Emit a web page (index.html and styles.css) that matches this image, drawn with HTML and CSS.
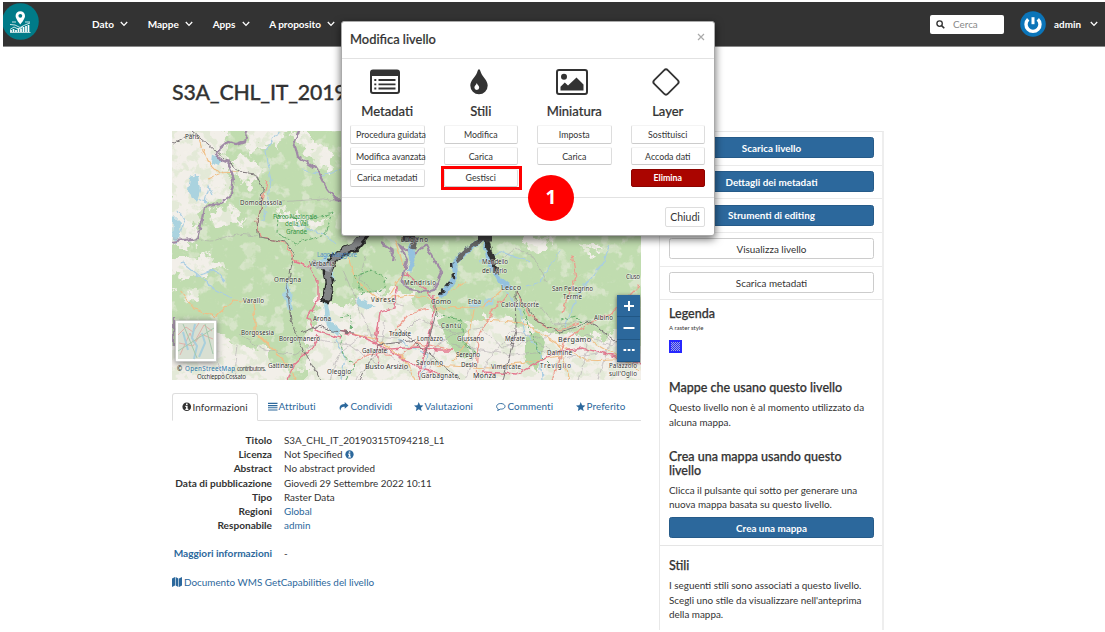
FILE: index.html
```html
<!DOCTYPE html>
<html lang="it">
<head>
<meta charset="utf-8">
<title>Modifica livello</title>
<link rel="stylesheet" href="styles.css">
</head>
<body>
<svg class="defs" width="0" height="0">
  <symbol id="chev" viewBox="0 0 8 6"><path d="M.8 1 4 4.4 7.200 1" fill="none" stroke="currentColor" stroke-width="1.3"/></symbol>
  <symbol id="star" viewBox="0 0 10 10"><path d="M5 0 6.400 3.300 10 3.600 7.300 6 8.100 9.600 5 7.700 1.900 9.600 2.700 6 0 3.600 3.600 3.300Z" fill="currentColor"/></symbol>
  <symbol id="info" viewBox="0 0 10 10"><circle cx="5" cy="5" r="4.600" fill="currentColor"/><path d="M4.200 1.600h1.700v1.500H4.200zM3.500 4h2.400v3.100h.8v1.200H3.500V7.100h.8V5.200h-.8z" fill="#fff"/></symbol>
</svg>

<header class="topbar">
  <svg class="logo" viewBox="3 2 36 40">
    <circle cx="20.500" cy="21.500" r="18.300" fill="#007b88"/>
    <path d="M20.300 11.200a4.700 4.700 0 0 0-4.700 4.700c0 3 4.700 8.500 4.700 8.500s4.700-5.500 4.700-8.500a4.700 4.700 0 0 0-4.700-4.700Z" fill="#fff"/>
    <circle cx="20.300" cy="15.800" r="1.900" fill="#007b88"/>
    <path d="M12 22h4M25 22h5M10 24.500l5 .5 5 2.500 5-2.500 5-2" stroke="#fff" stroke-width=".8" fill="none"/>
    <path d="M10 29.500l4-2.500 3 1.500 3 0 3-2" stroke="#fff" stroke-width=".8" fill="none"/>
    <path d="M11 32v-2M13.500 32v-3M16 32v-2M18.500 32v-3M21 32v-3.500M23.500 32v-5M26 32v-6M28.500 32v-7" stroke="#fff" stroke-width="1.700"/>
    <path d="M10 32.500h20.500" stroke="#fff" stroke-width=".7"/>
  </svg>
  <nav class="menu">
    <a>Dato<svg class="chev"><use href="#chev"/></svg></a>
    <a>Mappe<svg class="chev"><use href="#chev"/></svg></a>
    <a>Apps<svg class="chev"><use href="#chev"/></svg></a>
    <a>A proposito<svg class="chev"><use href="#chev"/></svg></a>
  </nav>
  <div class="search">
    <svg viewBox="0 0 10 10"><circle cx="4" cy="4" r="3" fill="none" stroke="#333" stroke-width="1.500"/><path d="M6.200 6.200 9.200 9.200" stroke="#333" stroke-width="1.800"/></svg>
    <span>Cerca</span>
  </div>
  <svg class="avatar" viewBox="0 0 26 26"><circle cx="13" cy="13" r="12.800" fill="#0b74b8"/><path d="M8.200 8.300a7 7 0 1 0 9.600 0" fill="none" stroke="#fff" stroke-width="3.400"/><path d="M13 6.200v7" stroke="#fff" stroke-width="3"/></svg>
  <a class="user">admin<svg class="chev"><use href="#chev"/></svg></a>
</header>

<main class="page">
  <h1>S3A_CHL_IT_20190315T094218_L1</h1>
  <div class="columns">
    <section class="content">
      <div class="map">
        <svg class="terrain" viewBox="172 131 469 249">
          <defs>
            <filter id="rough" x="-5%" y="-5%" width="110%" height="110%"><feTurbulence type="fractalNoise" baseFrequency=".09" numOctaves="4" seed="4"/><feDisplacementMap in="SourceGraphic" scale="24" xChannelSelector="R" yChannelSelector="G"/></filter>
            <filter id="wiggle" x="-5%" y="-5%" width="110%" height="110%" color-interpolation-filters="sRGB"><feTurbulence type="fractalNoise" baseFrequency=".14" numOctaves="2" seed="9"/><feDisplacementMap in="SourceGraphic" scale="6" xChannelSelector="R" yChannelSelector="G"/></filter>
            <filter id="fields" x="0" y="0" width="100%" height="100%"><feTurbulence type="fractalNoise" baseFrequency=".07" numOctaves="4" seed="12"/><feColorMatrix values="0 0 0 0 .9  0 0 0 0 .88  0 0 0 0 .82  9 0 0 0 -5"/></filter>
            <filter id="woods" x="0" y="0" width="100%" height="100%"><feTurbulence type="fractalNoise" baseFrequency=".09" numOctaves="4" seed="31"/><feColorMatrix values="0 0 0 0 .54  0 0 0 0 .73  0 0 0 0 .43  0 10 0 0 -5"/></filter>
          </defs>
          <rect x="172" y="131" width="469" height="249" fill="#c0dcaf"/>
          <g fill="#f2efe9" filter="url(#rough)">
            <path d="M165 120h55l10 15-8 20 10 25-12 22-18 5-6 35-30 10z"/>
            <path d="M225 160l25-5 15 18-15 15-12-12zM245 120l40 5-8 25-12-5-15 8zM292 132l12 2 30 20-4 20-20-15zM210 212l20-5 15 14-30 10zM275 210l30 4 25 8-15 6-30-4zM170 262l40-8 18 10-25 10-22 8zM176 290l28 5-18 12z"/>
            <path d="M165 350l45-22 25 18 30 2 20 22 15 25H165zM305 345l15-50 25 15 25-25 35 8 30 20 20 10 50-8 55 20 60-2 40 22 25-8v50H305zM530 235l25 5-10 10-22-3zM580 245l30 3-20 8z"/>
          </g>
          <rect x="172" y="131" width="469" height="249" filter="url(#fields)" opacity=".45"/>
          <rect x="172" y="131" width="469" height="249" filter="url(#woods)" opacity=".3"/>
          <g fill="#b5d8a5" filter="url(#wiggle)"><path d="M353 276l15-7 15 5 4 12-18 8-16-5zM438 320l14-4 15 8-4 17 10 14-12 4-14-17zM525 338l12-8 8 12-7 30-13-10z"/></g>
          <g fill="none" stroke="#a9cde2" stroke-width="1.200" filter="url(#wiggle)">
            <path d="M194 175l5 12-6 10 12 5 4-15 4 8M182 262l20 16 10 10 20 10M200 274l14-4 12 12M280 131l-14 20 5 30-8 40M302 170l20 5 20-6M297 225l25 8 15 12M505 290l15 20 5 22 15 20 2 28M560 250l-20 32-14 4M480 262l20-10 30 10M610 245l-8 20-25 30-12 32M335 340l10 18-4 22M178 210l7 12-10 22M398 340l30 15-8 25"/>
          </g>
          <g fill="#aad3df" filter="url(#wiggle)">
            <path d="M190 178l8-3 2 16-4 10-8-10zM173 215l8 8-2 18-7-2zM212 154l9 5-2 7-8-3zM285 287l3-6 3 10 2 21-5-2-4-13zM357 296l7 4 12 6-8 4-10-4zM470 302l12-2-2 8-10 1zM484 300l10-3-1 8-8 2z"/>
            <path d="M318 260l9-5 8 20-4 15-4 8 4 25 10 7-3 6-12-10-3-22 6-25z"/>
          </g>
          <g fill="none" stroke="#aaa3aa" stroke-width=".7" filter="url(#wiggle)" opacity=".75">
            <path d="M172 238l40 3 25-7 20 2M263 203l60-4 20 3M240 335l25 15 30 5 25-15 30 5 28 20M330 380l8-25 25-20 35 3 20-20 35 15 28-5 22 20 30-8 30 18 35-5 38 8M355 380l25-30 5-30M425 380l12-35 20-12 18 20-10 27M480 380l8-20 25-30 30 10 20-15 25 20-10 35M535 300l20 25 35-5 20 20-12 40M195 345l18 10 12 25M238 345l-4 35M343 270l30 70 40 35"/>
            <path d="M365 255l-5 25 25 20 20 5M500 260l15-12 20 10 12 25M585 335l25 10 30-8M452 345l60 10 70-6"/>
          </g>
          <g fill="none" stroke="#f0bf87" stroke-width="1.200" filter="url(#wiggle)">
            <path d="M198 136l9 25 12 12 20-1M208 178l16-6M180 290l15 20 20 6 18-16 20 2 3 30 15 15 18 20 10 17M254 302v30l30 28M345 250l12 32 22 18 30-5 28 4 30-18M433 308l50-1 20-18M345 332l30 7 30 20 10 21M473 310l-5 30-15 22M484 320l40 3 35 22 10 35M560 345l25 15 55-2M395 240l10 30-15 25M430 365l60 3 70-12M590 340l50 30"/>
          </g>
          <g fill="none" stroke="#65ad6d" stroke-width="1" stroke-dasharray="4 1.500" filter="url(#wiggle)">
            <path d="M278 215l25 6 30-8-8 22-30 8-18-10zM340 335l3 20 12 10-8 15M436 315l25 5 3 25 14 8M354 276l18-6 15 8-4 12-20 3zM520 300l8 25 12 30 10 10M340 317l12-2-2 15M560 320l15-4 10 10"/>
          </g>
          <g fill="none" stroke="#ee9a8c" stroke-width="1.200" filter="url(#wiggle)">
            <path d="M267 181l-3 14-7 27 3 15 26 6 8 18 11 4M390 335l18-20 20-6M507 294l-15 18-14 25-2 43M515 290l14 25 18 12 14 3 18-7M572 255l4 22-14 35M640 285l-30 30-15 5-30 20-12 40M352 365l18-12 30 2 18-12 35 7"/>
          </g>
          <g fill="none" stroke="#e3798f" stroke-width="1.400" filter="url(#wiggle)">
            <path d="M295 262l13 4 10 16v18l-10 17 7 13 24 8M287 380l6-15 20-18 5-12M340 331l25 7 20 10 30 18 25 8M379 365l-3-23 4-30 15-3 1-22M376 350l42-3 20 3 15 0M434 295l-2 30-8 30-6 25M482 372l35 2 40-22 25-4 60 16M405 272l28 25"/>
          </g>
          <g fill="none" stroke="#736c6f" stroke-width=".9" filter="url(#wiggle)">
            <path d="M192 130l48 42 15 2 8 15-1 14-5 20 2 15 28 4 7 13-7 30 4 35 9 23 20 37M172 144l22-10M300 333l18-7 15 5 20 2M400 330l30 25 30 25M425 355l11-42-2-14M515 290l1 40-13 50M515 290l20 30 25 12 30-10 40 30M360 380l18-35 38-5"/>
          </g>
          <g fill="none" stroke="#a08aa6" stroke-width="2.200" filter="url(#wiggle)">
            <path d="M248 129l-3 12-9 3-8-2-13 11 3 5 10 4 6 18-3 15-11 9-16 3-3 17-4 14-26 4"/>
            <path d="M300 129l-6 12 4 16 18 11 10 20 10 12 8 1M174 318v28M400 246l12 8 14-9 8 15 8 12-8 18-12 2-15-4-5-8 5-20zM382 243l12 8-2 10"/>
          </g>
          <g fill="none" filter="url(#wiggle)">
            <path d="M368 232l-14 16-12 4-9 7-6 12 2 11-2 14 -3 6" stroke="#292929" stroke-width="9"/>
            <path d="M367 232l-14 15-13 6-9 9-3 12 1 12-3 14" stroke="#828486" stroke-width="6"/>
            <path d="M312 263l18 5" stroke="#a7adb2" stroke-width="8"/>
            <path d="M416 237l-5 13 2 10-4 12M483 238l-19 16-9 7v16l-14 20M485 240l5 25 8 14 13 10" stroke="#94c1df" stroke-width="5"/>
            <path d="M416 237l-3 12M483 238l-19 15-8 8" stroke="#666" stroke-width="4"/>
            <path d="M452 263l1 15-14 18" stroke="#333" stroke-width="2.500" stroke-dasharray="6 4"/>
            <path d="M486 238l4 15 5 14 2 7" stroke="#333" stroke-width="5"/>
            <path d="M401 238h14M478 238h14" stroke="#444" stroke-width="7"/>
          </g>
          <g class="places">
            <text x="185" y="139">Paris</text>
            <text x="240" y="205" textLength="42">Domodossola</text>
            <text x="274" y="282" textLength="27">Omegna</text>
            <text x="309" y="266">Verbania</text>
            <text x="243" y="303" textLength="21">Varallo</text>
            <text x="241" y="335" textLength="33">Borgosesia</text>
            <text x="279" y="341" textLength="41">Borgomanero</text>
            <text x="313" y="321" textLength="18">Arona</text>
            <text x="371" y="302" textLength="24">Varese</text>
            <text x="389" y="336" textLength="22">Tradate</text>
            <text x="362" y="353" textLength="25">Gallarate</text>
            <text x="327" y="374" textLength="24">Oleggio</text>
            <text x="365" y="369" textLength="43" class="town">Busto Arsizio</text>
            <text x="268" y="368" textLength="25">Gattinara</text>
            <text x="197" y="379" textLength="49">Occhieppo Cossato</text>
            <text x="404" y="285" textLength="32">Mendrisio</text>
            <text x="401" y="242" textLength="27">Lugano</text>
            <text x="431" y="304" textLength="20" class="town">Como</text>
            <text x="468" y="304" textLength="13">Erba</text>
            <text x="441" y="328" textLength="20">Cantù</text>
            <text x="417" y="341" textLength="26">Lomazzo</text>
            <text x="457" y="341" textLength="27">Giussano</text>
            <text x="456" y="357" textLength="24">Seregno</text>
            <text x="461" y="367" textLength="16">Desio</text>
            <text x="416" y="365" textLength="27">Saronno</text>
            <text x="421" y="378" textLength="37">Garbagnate</text>
            <text x="473" y="378" textLength="23" class="town">Monza</text>
            <text x="491" y="369" textLength="30">Vimercate</text>
            <text x="505" y="341" textLength="20">Merate</text>
            <text x="482" y="264" textLength="26">Mandello</text>
            <text x="482" y="273" textLength="25">del Lario</text>
            <text x="501" y="290" textLength="20" class="town">Lecco</text>
            <text x="501" y="307" textLength="38">Calolziocorte</text>
            <text x="552" y="291" textLength="41">San Pellegrino</text>
            <text x="563" y="299" textLength="19">Terme</text>
            <text x="594" y="320" textLength="19">Albino</text>
            <text x="626" y="279" textLength="14">Cluso</text>
            <text x="558" y="342" textLength="33" class="town">Bergamo</text>
            <text x="547" y="355" textLength="25">Dalmine</text>
            <text x="540" y="368" textLength="31">Treviglio</text>
            <text x="609" y="368" textLength="28">Palazzolo</text>
            <text x="609" y="376" textLength="28">sull'Oglio</text>
          </g>
          <g class="park"><text x="273" y="219" textLength="44">Parco Nazionale</text><text x="285" y="226" textLength="23">della Val</text><text x="286" y="234" textLength="21">Grande</text></g>
          <text x="317" y="257" class="waterlabel" textLength="40">Lago Maggiore</text>
          <g class="credit"><text x="177" y="371">©</text><text x="185" y="371" textLength="50" fill="#2878af">OpenStreetMap</text><text x="237" y="371" textLength="29" fill="#555">contributors.</text></g>
          <g class="thumb">
            <rect x="175.500" y="320.500" width="41" height="41" fill="#fff" stroke="#bbb" stroke-width=".5"/>
            <rect x="178" y="323" width="36" height="36" fill="#d8dfd2"/>
            <path d="M178 335l8-8 7 5 6-9M180 355l10-22 4 10 10-18 8 6M179 343l14 3 8-12 12 5" stroke="#dfb1a9" fill="none"/>
            <path d="M195 324l-3 14 5 8-3 13M202 333l3 10-6 14M183 332l5 18" stroke="#a8cfdc" stroke-width="2" fill="none"/>
            <path d="M183 324l14 34M178 351l36-23M205 324l8 30" stroke="#a5c9ac" fill="none"/>
          </g>
        </svg>
        <div class="zoomctl"><b><svg viewBox="0 0 12 12"><path d="M6 1v10M1 6h10"/></svg></b><b><svg viewBox="0 0 12 12"><path d="M.5 6h11"/></svg></b><b><svg viewBox="0 0 12 12"><path d="M.5 6h2.700M4.700 6h2.700M8.900 6h2.700"/></svg></b></div>
      </div>
      <ul class="tabs">
        <li class="t1"><svg><use href="#info"/></svg>Informazioni</li>
        <li class="t2"><svg viewBox="0 0 10 10"><path d="M0 1.500h10M0 3.800h10M0 6.100h10M0 8.400h10" stroke="currentColor" stroke-width="1.200"/></svg>Attributi</li>
        <li class="t3"><svg viewBox="0 0 10 10"><path d="M6 0 10 3.600 6 7V5C3.500 4.700 2 5.500 1.500 9 0 7 0 2.200 6 2.200Z" fill="currentColor"/></svg>Condividi</li>
        <li class="t4"><svg><use href="#star"/></svg>Valutazioni</li>
        <li class="t5"><svg viewBox="0 0 10 10"><path d="M2.500 7.400C-1 5.500.7 1.600 5 1.600s6 3.600 3 5.300C6.500 7.600 5 7.500 4.500 7.500L1.700 9Z" fill="none" stroke="currentColor"/></svg>Commenti</li>
        <li class="t6"><svg><use href="#star"/></svg>Preferito</li>
      </ul>
      <dl class="info">
        <dt>Titolo</dt><dd>S3A_CHL_IT_20190315T094218_L1</dd>
        <dt>Licenza</dt><dd>Not Specified <svg><use href="#info"/></svg></dd>
        <dt>Abstract</dt><dd>No abstract provided</dd>
        <dt>Data di pubblicazione</dt><dd>Giovedì 29 Settembre 2022 10:11</dd>
        <dt>Tipo</dt><dd>Raster Data</dd>
        <dt>Regioni</dt><dd class="link">Global</dd>
        <dt>Responabile</dt><dd class="link">admin</dd>
      </dl>
      <dl class="info more"><dt class="link">Maggiori informazioni</dt><dd>-</dd></dl>
      <a class="wms link"><svg viewBox="0 0 10 10"><path d="M0 1.500 3 0v8.500L0 10zM3.600 0 6.400 1.500V10L3.600 8.500zM7 1.500 10 0v8.500L7 10z" fill="currentColor"/></svg>Documento WMS GetCapabilities del livello</a>
    </section>

    <aside class="side">
      <div class="row"><button class="btn primary">Scarica livello</button></div>
      <div class="row"><button class="btn primary">Dettagli dei metadati</button></div>
      <div class="row"><button class="btn primary">Strumenti di editing</button></div>
      <div class="row"><button class="btn">Visualizza livello</button></div>
      <div class="row"><button class="btn">Scarica metadati</button></div>
      <div class="panel legend"><h2>Legenda</h2><small>A raster style</small><svg viewBox="0 0 13 13"><rect width="13" height="13" fill="#2727ff"/><path d="M2 2.500h9M2 4.500h9M2 6.500h9M2 8.500h9M2 10.500h9" stroke="#a3acd8" stroke-dasharray="1 1"/><path d="M3 3.500h8M3 5.500h8M3 7.500h8M3 9.500h8" stroke="#a3acd8" stroke-dasharray="1 1"/></svg></div>
      <div class="panel maps"><h2>Mappe che usano questo livello</h2><p>Questo livello non è al momento utilizzato da<br>alcuna mappa.</p></div>
      <div class="panel create"><h2>Crea una mappa usando questo livello</h2><p>Clicca il pulsante qui sotto per generare una<br>nuova mappa basata su questo livello.</p><button class="btn primary">Crea una mappa</button></div>
      <div class="panel styles"><h2>Stili</h2><p>I seguenti stili sono associati a questo livello.<br>Scegli uno stile da visualizzare nell'anteprima<br>della mappa.</p></div>
    </aside>
  </div>
</main>

<div class="modal">
  <div class="modal-head"><span>Modifica livello</span><svg viewBox="0 0 8 8"><path d="M1 1 7 7M7 1 1 7" stroke="#aaa" stroke-width="1.200"/></svg></div>
  <div class="modal-body">
    <div class="col">
      <svg viewBox="0 0 30 26"><rect x="1" y="1.500" width="28" height="22.500" rx="2" fill="none" stroke="#333" stroke-width="2"/><path d="M1 2h28v5H1z" fill="#333"/><path d="M8.500 11h17M8.500 15.300h17M8.500 19.500h17" stroke="#333" stroke-width="1.800"/><path d="M4.300 11h2M4.300 15.300h2M4.300 19.500h2" stroke="#333" stroke-width="1.800"/></svg>
      <h3>Metadati</h3><button class="long">Procedura guidata</button><button class="long">Modifica avanzata</button><button>Carica metadati</button>
    </div>
    <div class="col">
      <svg class="drop" viewBox="0 0 30 26"><path d="M15 .3c-1 0-1.200 1.500-2 3.500C11.500 8 6.300 11.500 6.300 16.600a8.700 8.700 0 0 0 17.400 0C23.700 11.500 18.500 8 17 3.800 16.200 1.800 16 .3 15 .3Z" fill="#333"/><path d="M12.800 14c-.4 1.700-2.400 2.700-2.400 4.500a2.400 2.400 0 0 0 4.800 0c0-1.800-2-2.800-2.400-4.500Z" fill="#fff"/></svg>
      <h3>Stili</h3><button>Modifica</button><button>Carica</button><button>Gestisci</button>
    </div>
    <div class="col">
      <svg class="pic" viewBox="0 0 32 26"><rect x="1" y="1" width="30" height="24" rx="2" fill="none" stroke="#333" stroke-width="2"/><circle cx="8" cy="7.700" r="3" fill="#333"/><path d="M4.500 21.500v-3.800l4.300-4.200 3.200 3 8.500-8 7 7v6z" fill="#333"/></svg>
      <h3>Miniatura</h3><button>Imposta</button><button>Carica</button>
    </div>
    <div class="col">
      <svg class="dia" viewBox="0 0 30 30"><rect x="5.300" y="5.300" width="19.400" height="19.400" rx="2.800" transform="rotate(45 15 15)" fill="none" stroke="#333" stroke-width="1.800"/></svg>
      <h3>Layer</h3><button>Sostituisci</button><button>Accoda dati</button><button class="danger">Elimina</button>
    </div>
  </div>
  <div class="modal-foot"><button>Chiudi</button></div>
</div>
<div class="highlight"></div>
<div class="step">1</div>
</body>
</html>
```

FILE: styles.css
```css
* { box-sizing: border-box; }
body { margin: 0; width: 1105px; height: 632px; overflow: hidden; position: relative; background: #fff; color: #333; font: 9.9px/14.2px Lato, "Open Sans", sans-serif; }
h1, h2, h3, p, ul, dl, dd { margin: 0; padding: 0; }
button { font-family: inherit; color: inherit; padding: 0; white-space: nowrap; }
.defs { position: absolute; }
.link { color: #2c689c; }

.topbar { display: flex; align-items: center; height: 45px; margin: 2px 0 0 3px; background: #333; border-bottom: 1px solid #888; color: #fff; font-weight: 700; }
.logo { width: 36px; height: 40px; align-self: flex-start; }
.menu { display: flex; gap: 19.5px; margin-left: 53px; flex: 1; font-size: 10px; }
.menu a, .user { display: flex; align-items: center; white-space: nowrap; }
.chev { width: 8px; height: 6px; margin-left: 6.3px; }
.search { display: flex; align-items: center; width: 74px; height: 19px; margin-right: 16px; padding-left: 6px; background: #fff; border-radius: 2px; color: #888; font-weight: 400; gap: 8px; }
.search svg { width: 9px; height: 9px; }
.avatar { width: 26px; height: 26px; margin-right: 8px; }
.user { margin-right: 7px; }
.user .chev { margin-left: 9px; }

.page { width: 712px; margin-left: 172px; padding-top: 30px; }
h1 { height: 54px; font-size: 21.3px; line-height: 30px; font-weight: 500; letter-spacing: -.2px; -webkit-text-stroke: .3px #333; }
.columns { display: flex; justify-content: space-between; }
.content { width: 469px; }
.map { position: relative; height: 249px; overflow: hidden; }
.terrain { display: block; width: 469px; height: 249px; }
.terrain text { font: 6.2px "Noto Sans", sans-serif; }
.places { fill: #303030; stroke: #fff; stroke-width: 1.2px; stroke-opacity: .6; paint-order: stroke; }
.terrain .town { font-size: 7.2px; }
.park { fill: #329344; }
.waterlabel { fill: #5792c7; }
.thumb { filter: drop-shadow(0 1px 3px #777); }
.zoomctl { position: absolute; right: 1px; top: 164px; width: 23px; height: 67px; display: flex; flex-direction: column; background: #2c689c; box-shadow: 0 1px 4px #555; }
.zoomctl b { flex: 1; display: flex; align-items: center; justify-content: center; border-bottom: 1px solid #215785; }
.zoomctl svg { width: 12px; height: 12px; stroke: #fff; stroke-width: 2; }

.tabs { display: flex; height: 28px; margin-top: 13px; list-style: none; border-bottom: 1px solid #ddd; color: #2c689c; }
.tabs li { display: flex; align-items: center; padding: 0 0 0 10px; white-space: nowrap; letter-spacing: .1px; }
.tabs svg { width: 9.5px; height: 9.5px; margin-right: 1px; }
.tabs .t1 { width: 86px; height: 28px; border: 1px solid #ddd; border-bottom-color: #fff; border-radius: 3px 3px 0 0; color: #333; padding-left: 9px; }
.t2 { width: 71px; } .t3 { width: 75px; } .t4 { width: 82px; } .t5 { width: 80px; }
.tabs .t5 svg, .tabs .t3 svg { margin-right: 2px; }

.info { display: grid; grid-template-columns: 100px 1fr; column-gap: 12px; margin-top: 12px; }
.info dt { font-size: 10.1px; font-weight: 700; text-align: right; white-space: nowrap; }
.info svg { width: 9px; height: 9px; color: #2c689c; vertical-align: -1px; }
.more { margin-top: 14px; }
.wms { display: flex; align-items: center; margin-top: 14px; }
.wms svg { width: 10px; height: 10px; margin-right: 2px; }

.side { width: 225px; height: 499px; border: 1px solid #e8e8e8; border-right: 2px solid #eee; border-bottom: 0; }
.row { height: 33.7px; padding: 5.4px 8px 0 9px; border-bottom: 1px solid #eaeaea; }
.btn { display: block; width: 100%; height: 21px; border: 1px solid #ccc; border-radius: 2.5px; background: #fff; font-size: 9.9px; line-height: 18px; }
.primary { background: #2c689c; border-color: #265b89; color: #fff; font-weight: 700; }
h2 { font-size: 12.5px; line-height: 14px; font-weight: 500; -webkit-text-stroke: .25px #333; }
.panel { padding: 7px 8px 0 9px; }
.panel p { margin-top: 5px; white-space: nowrap; }
.legend { height: 74px; }
.legend small { display: block; margin-top: 0; font-size: 6px; }
.legend svg { display: block; width: 13px; height: 13px; margin-top: 4px; }
.maps { height: 69px; }
.create { height: 102px; }
.create p { margin-top: 4.4px; }
.create .btn { margin-top: 6px; }
.styles { border-top: 1px solid #e5e5e5; padding-top: 13px; }

.modal { position: absolute; left: 341px; top: 21px; width: 374px; height: 215px; background: #fff; border: 1px solid #aaa; border-radius: 3px; box-shadow: 0 3px 9px rgba(0,0,0,.6); }
.modal-head { display: flex; justify-content: space-between; height: 37px; padding: 9px 9px 0 8px; border-bottom: 1px solid #e2e2e2; font-size: 12.9px; line-height: 17px; font-weight: 500; -webkit-text-stroke: .2px #333; }
.modal-head svg { width: 8px; height: 8px; margin-top: 2px; }
.modal-body { display: flex; gap: 19px; height: 139px; padding: 10px 9px 0 8px; border-bottom: 1px solid #e2e2e2; }
.col { display: flex; flex-direction: column; align-items: center; width: 74.5px; }
.col svg { width: 30px; height: 26px; margin-left: -4px; }
.col .pic { width: 32px; height: 26px; margin-left: -4px; }
.col .dia { width: 30px; height: 30px; margin: -2px 4px -2px 0; }
h3 { margin: 8px 0 5px; font-size: 13px; line-height: 17px; font-weight: 500; -webkit-text-stroke: .2px #333; }
.col button { width: 74.5px; height: 18.500px; margin-bottom: 3.3px; flex: none; background: #fff; border: 1px solid #ddd; border-top-color: #f4f4f4; border-bottom-color: #ccc; border-radius: 2px; font-size: 8.8px; line-height: 15px; }
.col .long { padding-left: 5px; text-align: left; }
.col .danger { background: #aa0500; border-color: #8d0400; color: #fff; font-weight: 700; }
.modal-foot { display: flex; justify-content: flex-end; padding: 9px 9px 0; }
.modal-foot button { width: 40px; height: 20px; background: #fff; border: 1px solid #ddd; border-radius: 2px; font-size: 10.5px; }
.highlight { position: absolute; left: 441px; top: 166px; width: 81px; height: 24px; border: 3px solid #f00; }
.step { position: absolute; left: 528px; top: 175px; width: 46px; height: 46px; border-radius: 50%; background: #f00; color: #fff; text-align: center; font: 700 19px/45px "Open Sans", sans-serif; }
```
